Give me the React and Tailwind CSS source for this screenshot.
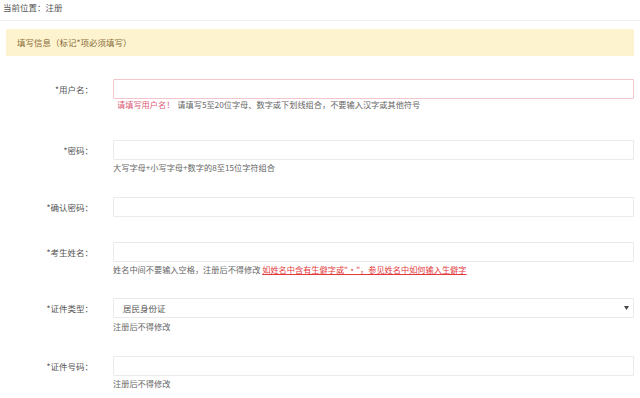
import React from "react";

const font = { fontFamily: '"Noto Sans CJK SC", "Noto Sans", sans-serif' };

function Row({ label, children, help, mb, helpClass = "mt-[1px] leading-[12px]", invalid }) {
  return (
    <div className={`flex items-start ${mb}`}>
      <div className="w-[113px] shrink-0 pr-[20px] text-right h-[20px] leading-[20px] text-[8.5px] text-[#555]">
        {label}
      </div>
      <div className="flex-1 mr-[6px]">
        {children || (
          <div
            className={`h-[20px] rounded-[1px] border bg-white ${
              invalid ? "border-[#f2c6cb]" : "border-[#ebebeb]"
            }`}
          ></div>
        )}
        {help && <div className={`${helpClass} text-[8.2px] text-[#666] whitespace-nowrap`}>{help}</div>}
      </div>
    </div>
  );
}

export default function App() {
  return (
    <div className="w-[640px] h-[398px] bg-white overflow-hidden" style={font}>
      <div className="h-[21px] border-b border-[#f0f0f0] px-[3px] pt-[1px] text-[8.5px] leading-[12px] text-[#555]">
        当前位置：注册
      </div>
      <div className="mx-[6px] mt-[8px] h-[27px] bg-[#fdf3cf] rounded-[1px] pl-[11px] text-[8.5px] leading-[27px] text-[#8a6d3b]">
        填写信息（标记*项必须填写）
      </div>
      <div className="mt-[23px]">
        <Row
          label="*用户名："
          invalid
          mb="mb-[30px]"
          helpClass="mt-0 leading-[11px]"
          help={
            <span>
              <span className="ml-[4px] text-[#dc5874]">请填写用户名！</span>
              <span className="ml-[3px]">请填写5至20位字母、数字或下划线组合，不要输入汉字或其他符号</span>
            </span>
          }
        />
        <Row label="*密码：" mb="mb-[24px]" help="大写字母+小写字母+数字的8至15位字符组合" />
        <Row label="*确认密码：" mb="mb-[25px]" />
        <Row
          label="*考生姓名："
          mb="mb-[23px]"
          help={
            <span>
              姓名中间不要输入空格，注册后不得修改{" "}
              <span className="text-[#e4393c] underline">如姓名中含有生僻字或"·"，参见姓名中如何输入生僻字</span>
            </span>
          }
        />
        <Row
          label="*证件类型："
          mb="mb-[24px]"
          helpClass="mt-[2px] leading-[12px]"
          help="注册后不得修改"
        >
          <div className="h-[20px] rounded-[1px] border border-[#ebebeb] bg-white flex items-center justify-between pl-[9px] pr-[4px] text-[8.5px] text-[#555]">
            <span>居民身份证</span>
            <svg width="5" height="4" viewBox="0 0 5 4">
              <path d="M0 0 L5 0 L2.5 4 Z" fill="#444" />
            </svg>
          </div>
        </Row>
        <Row label="*证件号码：" mb="mb-0" help="注册后不得修改" />
      </div>
    </div>
  );
}
